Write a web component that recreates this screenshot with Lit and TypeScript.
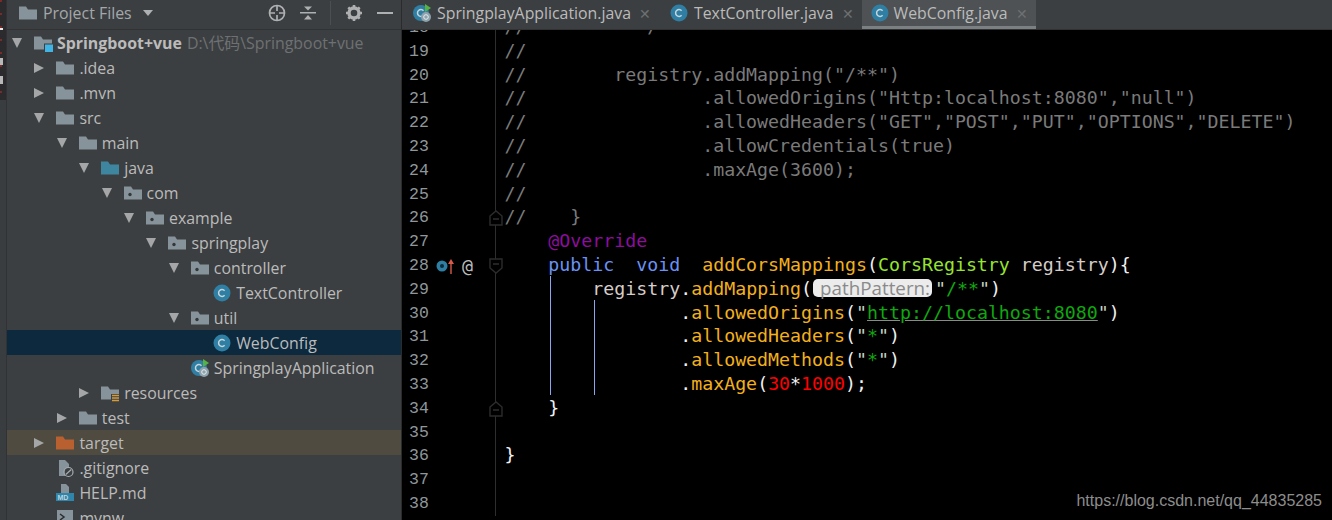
import { LitElement, html, css, svg } from "lit";
import { customElement } from "lit/decorators.js";

const folderPath = "M0 2.5h7l2 3h9v10H0z";
const icon = (k: string) => {
  switch (k) {
    case "folder": return html`<svg class="ic" viewBox="0 0 18 18"><path d="${folderPath}" fill="#87939a"/></svg>`;
    case "src": return html`<svg class="ic" viewBox="0 0 18 18"><path d="${folderPath}" fill="#3e86a0"/></svg>`;
    case "target": return html`<svg class="ic" viewBox="0 0 18 18"><path d="${folderPath}" fill="#b8602f"/></svg>`;
    case "pkg": return html`<svg class="ic" viewBox="0 0 18 18"><path d="${folderPath}" fill="#87939a"/><circle cx="6" cy="10.5" r="1.7" fill="#33373a"/></svg>`;
    case "res": return html`<svg class="ic" viewBox="0 0 18 18"><path d="${folderPath}" fill="#87939a"/><rect x="10" y="10" width="9" height="9" fill="#3c3f41"/><path d="M11 11.5h7M11 14h7M11 16.5h7" stroke="#d39b3a" stroke-width="1.4"/></svg>`;
    case "mod": return html`<svg class="ic" viewBox="0 0 18 18"><path d="${folderPath}" fill="#87939a"/><rect x="10" y="9.5" width="9.5" height="9" fill="#3c3f41"/><rect x="11" y="10.5" width="8" height="7.5" fill="#3fb4e5"/></svg>`;
    case "class": return html`<svg class="ic" viewBox="0 0 18 18"><circle cx="9" cy="9" r="8.5" fill="#2f7fa4"/><path d="M11.6 6.8a3.4 3.4 0 1 0 0 4.4" fill="none" stroke="#c7d4da" stroke-width="1.5"/></svg>`;
    case "spring": return html`<svg class="ic" viewBox="0 0 18 18"><circle cx="8" cy="9" r="8" fill="#2f7fa4"/><path d="M10.5 6.8a3.4 3.4 0 1 0 0 4.4" fill="none" stroke="#c7d4da" stroke-width="1.5"/><path d="M12 0l6 4-6 4z" fill="#55b244"/><circle cx="13" cy="13" r="5" fill="#8ea2ad"/><circle cx="13" cy="13" r="2.3" fill="none" stroke="#e6edf0" stroke-width="1"/></svg>`;
    case "ignore": return html`<svg class="ic" viewBox="0 0 18 18"><path d="M3 1h6l4 4v12H3z" fill="#87939a"/><circle cx="12.5" cy="13" r="4.5" fill="#3c3f41" stroke="#a6aeb3" stroke-width="1.2"/><path d="M9.8 15.5l5.5-5" stroke="#a6aeb3" stroke-width="1.2"/></svg>`;
    case "md": return html`<svg class="ic" viewBox="0 0 18 18"><path d="M5 0h5l3 3v6H5z" fill="#87939a"/><rect x="0" y="9" width="18" height="8" fill="#2e86ac"/><text x="1.4" y="15.6" font-size="7" font-weight="700" font-family="Liberation Sans" fill="#bcd4de">MD</text></svg>`;
    case "sh": return html`<svg class="ic" viewBox="0 0 18 18"><rect x="1" y="1" width="16" height="16" fill="#87939a"/><path d="M4 5l4 3-4 3" fill="none" stroke="#2b2d2f" stroke-width="1.5"/></svg>`;
  }
  return null;
};

interface Node { d: number; arrow?: "r" | "d"; ic: string; t: string; cls?: string; path?: string; }
const tree: Node[] = [
  { d: 0, arrow: "d", ic: "mod", t: "Springboot+vue", cls: "bold", path: "D:\\代码\\Springboot+vue" },
  { d: 1, arrow: "r", ic: "folder", t: ".idea" },
  { d: 1, arrow: "r", ic: "folder", t: ".mvn" },
  { d: 1, arrow: "d", ic: "folder", t: "src" },
  { d: 2, arrow: "d", ic: "folder", t: "main" },
  { d: 3, arrow: "d", ic: "src", t: "java" },
  { d: 4, arrow: "d", ic: "pkg", t: "com" },
  { d: 5, arrow: "d", ic: "pkg", t: "example" },
  { d: 6, arrow: "d", ic: "pkg", t: "springplay" },
  { d: 7, arrow: "d", ic: "pkg", t: "controller" },
  { d: 8, ic: "class", t: "TextController" },
  { d: 7, arrow: "d", ic: "pkg", t: "util" },
  { d: 8, ic: "class", t: "WebConfig", cls: "sel" },
  { d: 7, ic: "spring", t: "SpringplayApplication" },
  { d: 3, arrow: "r", ic: "res", t: "resources" },
  { d: 2, arrow: "r", ic: "folder", t: "test" },
  { d: 1, arrow: "r", ic: "target", t: "target", cls: "excl" },
  { d: 1, ic: "ignore", t: ".gitignore" },
  { d: 1, ic: "md", t: "HELP.md" },
  { d: 1, ic: "sh", t: "mvnw" },
];

type Seg = [string, string];
const c = "cm", w = "w", s2 = "s2", y = "y", g = "g", q = "q", r = "r", b = "b", p = "p", n = "lg", u = "u";
const code: { no: number; segs: (Seg | "hint")[]; fold?: "up" | "down"; mark?: boolean }[] = [
  { no: 18, segs: [[c, "//          */"]] },
  { no: 19, segs: [[c, "//"]] },
  { no: 20, segs: [[c, '//        registry.addMapping("/**")']] },
  { no: 21, segs: [[c, '//                .allowedOrigins("Http:localhost:8080","null")']] },
  { no: 22, segs: [[c, '//                .allowedHeaders("GET","POST","PUT","OPTIONS","DELETE")']] },
  { no: 23, segs: [[c, "//                .allowCredentials(true)"]] },
  { no: 24, segs: [[c, "//                .maxAge(3600);"]] },
  { no: 25, segs: [[c, "//"]] },
  { no: 26, segs: [[c, "//    }"]], fold: "up" },
  { no: 27, segs: [[p, "    @Override"]] },
  { no: 28, segs: [[b, "    public  void  "], [y, "addCorsMappings"], [w, "("], [n, "CorsRegistry "], [s2, "registry"], [w, "){"]], fold: "down", mark: true },
  { no: 29, segs: [[s2, "        registry"], [w, "."], [y, "addMapping"], [w, "("], "hint", [q, '"'], [g, "/**"], [q, '"'], [w, ")"]] },
  { no: 30, segs: [[w, "                ."], [y, "allowedOrigins"], [w, "("], [q, '"'], [u, "http://localhost:8080"], [q, '"'], [w, ")"]] },
  { no: 31, segs: [[w, "                ."], [y, "allowedHeaders"], [w, "("], [q, '"'], [g, "*"], [q, '"'], [w, ")"]] },
  { no: 32, segs: [[w, "                ."], [y, "allowedMethods"], [w, "("], [q, '"'], [g, "*"], [q, '"'], [w, ")"]] },
  { no: 33, segs: [[w, "                ."], [y, "maxAge"], [w, "("], [r, "30"], [w, "*"], [r, "1000"], [w, ");"]] },
  { no: 34, segs: [[w, "    }"]], fold: "up" },
  { no: 35, segs: [] },
  { no: 36, segs: [[w, "}"]] },
  { no: 37, segs: [] },
  { no: 38, segs: [] },
];

const foldUp = svg`<path d="M1 6l6-5 6 5v9H1z" fill="#000" stroke="#2c2c2c" stroke-width="1.4"/><path d="M4 9h6" stroke="#3a3a3a" stroke-width="1.2"/>`;
const foldDown = svg`<path d="M1 1h12v9l-6 5-6-5z" fill="#000" stroke="#2c2c2c" stroke-width="1.4"/><path d="M4 6h6" stroke="#3a3a3a" stroke-width="1.2"/>`;

@customElement("app-root")
export class AppRoot extends LitElement {
  static styles = css`
    :host { display: flex; width: 1332px; height: 520px; overflow: hidden; background: #000; font-family: "Open Sans", "Noto Sans CJK SC", sans-serif; }
    .strip { width: 6px; flex: none; background: #3a3d3f; border-right: 1px solid #303234; }
    .strip-top { height: 100px; background:
      linear-gradient(#e8e8e8, #e8e8e8) 0 28px / 3px 2px no-repeat,
      linear-gradient(#b8b8b8, #b8b8b8) 0 58px / 3px 7px no-repeat,
      linear-gradient(#b8b8b8, #b8b8b8) 0 76px / 3px 8px no-repeat,
      repeating-linear-gradient(#7a2a2a 0 2px, transparent 2px 13px) 0 0 / 2px 100% no-repeat,
      #2b2b2d; }
    .side { width: 394px; flex: none; background: #3c3f41; color: #bbbbbb; font-size: 15.9px; display: flex; flex-direction: column; overflow: hidden; }
    .sep { width: 1px; flex: none; background: #2b2b2b; }
    .head { height: 26px; padding-bottom: 3px; flex: none; display: flex; align-items: center; padding-left: 12px; border-bottom: 1px solid #323232; color: #a4a8aa; gap: 6px; }
    .head .ic { margin-right: 0; }
    .caret { width: 0; height: 0; border: 5.5px solid transparent; border-top: 6px solid #aeb0b1; border-bottom: 0; margin-left: 5px; }
    .tools { margin-left: auto; display: flex; align-items: center; gap: 14px; padding-right: 8px; }
    .tools svg { display: block; }
    .tsep { width: 1px; height: 24px; background: #4c4f51; }
    .row { height: 25px; display: flex; align-items: center; white-space: pre; }
    .row.sel { background: #0d293e; }
    .row.excl { background: #4f4b41; }
    .arrow { width: 22px; flex: none; display: flex; justify-content: flex-start; }
    .tri-r { width: 0; height: 0; border: 5px solid transparent; border-left: 10px solid #a4a6a7; border-right: 0; }
    .tri-d { width: 0; height: 0; border: 5.5px solid transparent; border-top: 10px solid #a4a6a7; border-bottom: 0; }
    .ic { width: 18px; height: 18px; flex: none; margin-right: 5px; overflow: visible; }
    .bold { font-weight: 700; }
    .path { color: #6e7173; margin-left: 5px; }
    .editor { flex: 1; display: flex; flex-direction: column; min-width: 0; }
    .tabs { height: 29px; flex: none; display: flex; background: #3c3f41; border-bottom: 1px solid #323232; color: #bbbbbb; font-size: 15.85px; }
    .tab { display: flex; align-items: center; padding: 0 8px 3px 11px; white-space: pre; }
    .tab .ic { margin-right: 6px; }
    .tab.on { background: #4e5254; box-shadow: inset 0 -3px 0 #7b8083; padding-left: 9px; }
    .tab.on .ic { margin-right: 5px; }
    .x { color: #6d7072; margin-left: 8px; font-size: 14px; }
    .code { flex: 1; position: relative; overflow: hidden; background: #000; font-family: "DejaVu Sans Mono", "Liberation Mono", monospace; font-size: 18.25px; }
    .scroll { margin-top: -14px; }
    .line { height: 23.8px; line-height: 23.8px; display: flex; white-space: pre; }
    .no { width: 33px; flex: none; padding-left: 7px; box-sizing: border-box; color: #8f979b; font-size: 16.5px; font-family: "Liberation Mono", monospace; }
    .mk { width: 50px; flex: none; display: flex; align-items: center; gap: 4px; color: #b5b5b5; }
    .fold { width: 10px; flex: none; position: relative; border-right: 1px solid #2e2e2e; }
    .fold svg { position: absolute; left: 4px; top: 4px; width: 14px; height: 16px; overflow: visible; z-index: 1; }
    .txt { padding-left: 8.4px; line-height: 21px; }
    .cm { color: #7a7a7a; } .w { color: #f0f0f0; } .s2 { color: #d6ccc8; } .y { color: #f2b01d; } .g { color: #0fa80f; } .q { color: #c5d5c5; } .r { color: #f00; }
    .b { color: #6a92f5; } .p { color: #8d0e9c; } .lg { color: #96e62c; }
    .u { color: #0fa80f; text-decoration: underline; text-decoration-color: #8a8a8a; }
    .hint { display: inline-block; background: #ececec; color: #8a8a8a; font-family: "Open Sans", sans-serif; font-size: 18.8px; line-height: 18px; height: 18px; border-radius: 5px; padding: 0 2px 0 7px; margin: 0 3px 0 1px; vertical-align: 0; }
    .guide { position: absolute; width: 1px; background: #86a8ee; }
    .g1 { left: 148px; top: 246px; height: 119px; }
    .g2 { left: 192px; top: 270px; height: 95px; }
    .mk-icon { margin-left: 1px; }
    .at { color: #bdbdbd; }
    .wm { position: absolute; right: 10px; bottom: 10px; color: #8d8d8d; font: 16px "Liberation Sans", sans-serif; }
  `;

  render() {
    return html`
      <div class="strip"><div class="strip-top"></div></div>
      <aside class="side">
        <div class="head">
          ${icon("folder")}<span>Project Files</span><i class="caret"></i>
          <div class="tools">
            <svg width="18" height="18" viewBox="0 0 18 18" fill="none" stroke="#aeb0b1" stroke-width="1.7"><circle cx="9" cy="9" r="7.5"/><path d="M9 1v6M9 11v6M1 9h6M11 9h6"/></svg>
            <svg width="16" height="18" viewBox="0 0 16 18" fill="#aeb0b1"><path d="M0 8h16v1.6H0zM8 6.5L4 2.5h8zM8 11l4 4.5H4z"/></svg>
            <i class="tsep"></i>
            <svg width="18" height="18" viewBox="0 0 18 18"><circle cx="9" cy="9" r="5" fill="none" stroke="#aeb0b1" stroke-width="3.4"/><path d="M9 1v3M9 14v3M1 9h3M14 9h3M3.3 3.3l2.1 2.1M12.6 12.6l2.1 2.1M3.3 14.7l2.1-2.1M12.6 5.4l2.1-2.1" stroke="#aeb0b1" stroke-width="2.6"/></svg>
            <svg width="16" height="18" viewBox="0 0 16 18"><rect y="8" width="16" height="2" fill="#aeb0b1"/></svg>
          </div>
        </div>
        <div class="tree">
          ${tree.map(
            (t) => html`<div class="row ${t.cls === "sel" || t.cls === "excl" ? t.cls : ""}" style="padding-left:${t.d * 22.4 + 5 + (t.arrow ? 0 : 22)}px">
              ${t.arrow ? html`<span class="arrow"><i class="${t.arrow === "r" ? "tri-r" : "tri-d"}"></i></span>` : ""}
              ${icon(t.ic)}<span class="${t.cls === "bold" ? "bold" : ""}">${t.t}</span>${t.path ? html`<span class="path">${t.path}</span>` : ""}
            </div>`
          )}
        </div>
      </aside>
      <div class="sep"></div>
      <main class="editor">
        <div class="tabs">
          <div class="tab">${icon("spring")}<span>SpringplayApplication.java</span><span class="x">✕</span></div>
          <div class="tab">${icon("class")}<span>TextController.java</span><span class="x">✕</span></div>
          <div class="tab on">${icon("class")}<span>WebConfig.java</span><span class="x">✕</span></div>
        </div>
        <div class="code">
          <div class="scroll">
          ${code.map(
            (l) => html`<div class="line">
              <span class="no">${l.no}</span>
              <span class="mk">${l.mark ? html`<svg class="mk-icon" width="22" height="18" viewBox="0 0 22 18"><circle cx="6" cy="9" r="5.5" fill="#2f7fa4"/><circle cx="6" cy="9" r="2" fill="#0c2c3a"/><path d="M15 17V5" stroke="#d95a4a" stroke-width="1.4"/><path d="M15 2l-3 5h6z" fill="#d95a4a"/></svg><span class="at">@</span>` : ""}</span>
              <span class="fold">${l.fold ? html`<svg viewBox="0 0 14 16">${l.fold === "up" ? foldUp : foldDown}</svg>` : ""}</span>
              <span class="txt">${l.segs.map((s) => s === "hint" ? html`<span class="hint">pathPattern:</span>` : html`<span class="${s[0]}">${s[1]}</span>`)}</span>
            </div>`
          )}
          </div>
          <i class="guide g1"></i>
          <i class="guide g2"></i>
          <div class="wm">https://blog.csdn.net/qq_44835285</div>
        </div>
      </main>
    `;
  }
}
